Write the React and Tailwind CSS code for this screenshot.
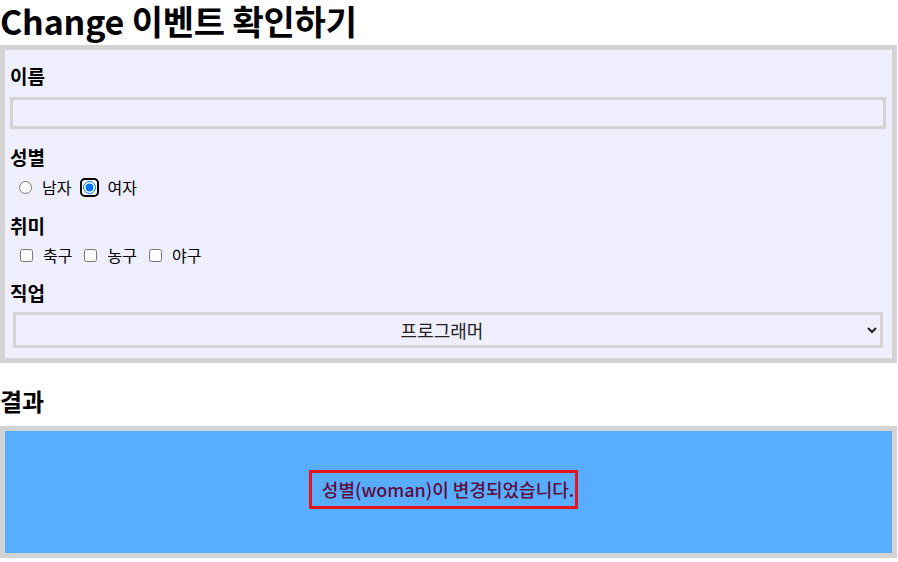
import { useState } from "react";

const FONT = '"Noto Sans CJK KR", "Noto Sans", sans-serif';

const App = () => {
    const [gender, setGender] = useState("woman");
    const [hobbies, setHobbies] = useState([]);
    const [job, setJob] = useState("programmer");

    const toggleHobby = (h) =>
        setHobbies((prev) => (prev.includes(h) ? prev.filter((x) => x !== h) : [...prev, h]));

    return (
        <div className="w-[898px] h-[562px] bg-white text-black overflow-hidden" style={{ fontFamily: FONT }}>
            <h1 className="h-[45px] text-[34px] font-bold leading-[42px] tracking-[-0.2px] whitespace-nowrap">Change 이벤트 확인하기</h1>

            {/* form */}
            <div className="w-[897px] h-[318px] border-[5px] border-[#d3d3d3] bg-[#eeeefd] pl-[5px] pr-[6px] pt-[13px]">
                <div className="h-[26px] text-[19px] font-bold leading-[26px]">이름</div>
                <input type="text" className="mt-[8px] block w-full h-[32px] border-[3px] border-[#d3d3d3] bg-transparent" />

                <div className="mt-[15px] h-[26px] text-[19px] font-bold leading-[26px]">성별</div>
                <div className="mt-[6px] h-[22px] flex items-center text-[16px] pl-[9px]">
                    <input type="radio" name="gender" checked={gender === "man"} onChange={() => setGender("man")} className="w-[13px] h-[13px] m-0" />
                    <span className="ml-[10px]">남자</span>
                    <span className="ml-[9px] inline-flex items-center justify-center w-[19px] h-[19px] rounded-[5px] border-2 border-black bg-white">
                        <input type="radio" name="gender" checked={gender === "woman"} onChange={() => setGender("woman")} className="w-[13px] h-[13px] m-0 outline-none" />
                    </span>
                    <span className="ml-[8px]">여자</span>
                </div>

                <div className="mt-[15px] h-[26px] text-[19px] font-bold leading-[26px]">취미</div>
                <div className="mt-[5px] h-[22px] flex items-center text-[16px] pl-[10px]">
                    {["축구", "농구", "야구"].map((h) => (
                        <label key={h} className="flex items-center mr-[12px]">
                            <input type="checkbox" checked={hobbies.includes(h)} onChange={() => toggleHobby(h)} className="w-[13px] h-[13px] m-0" />
                            <span className="ml-[10px]">{h}</span>
                        </label>
                    ))}
                </div>

                <div className="mt-[14px] h-[26px] text-[19px] font-bold leading-[26px]">직업</div>
                <div className="mt-[6px] px-[3px]">
                    <select value={job} onChange={(e) => setJob(e.target.value)} className="block w-full h-[36px] border-[3px] border-[#d3d3d3] bg-transparent text-[18px] text-[#222] text-center [text-align-last:center]">
                        <option value="programmer">프로그래머</option>
                        <option value="designer">디자이너</option>
                        <option value="student">학생</option>
                    </select>
                </div>
            </div>

            <h2 className="mt-[25px] h-[38px] text-[24px] font-bold leading-[26px]">결과</h2>

            {/* result */}
            <div className="w-[897px] h-[132px] border-[5px] border-[#d3d3d3] bg-[#58adff] flex items-center justify-center">
                <div className="mt-[-5px] mr-[10px] h-[39px] border-[3px] border-[#e3161e] flex items-center pl-[10px] pr-[1px] text-[18px] font-medium text-[#5e0c3c] whitespace-nowrap">
                    성별({gender})이 변경되었습니다.
                </div>
            </div>
        </div>
    );
};

export default App;
